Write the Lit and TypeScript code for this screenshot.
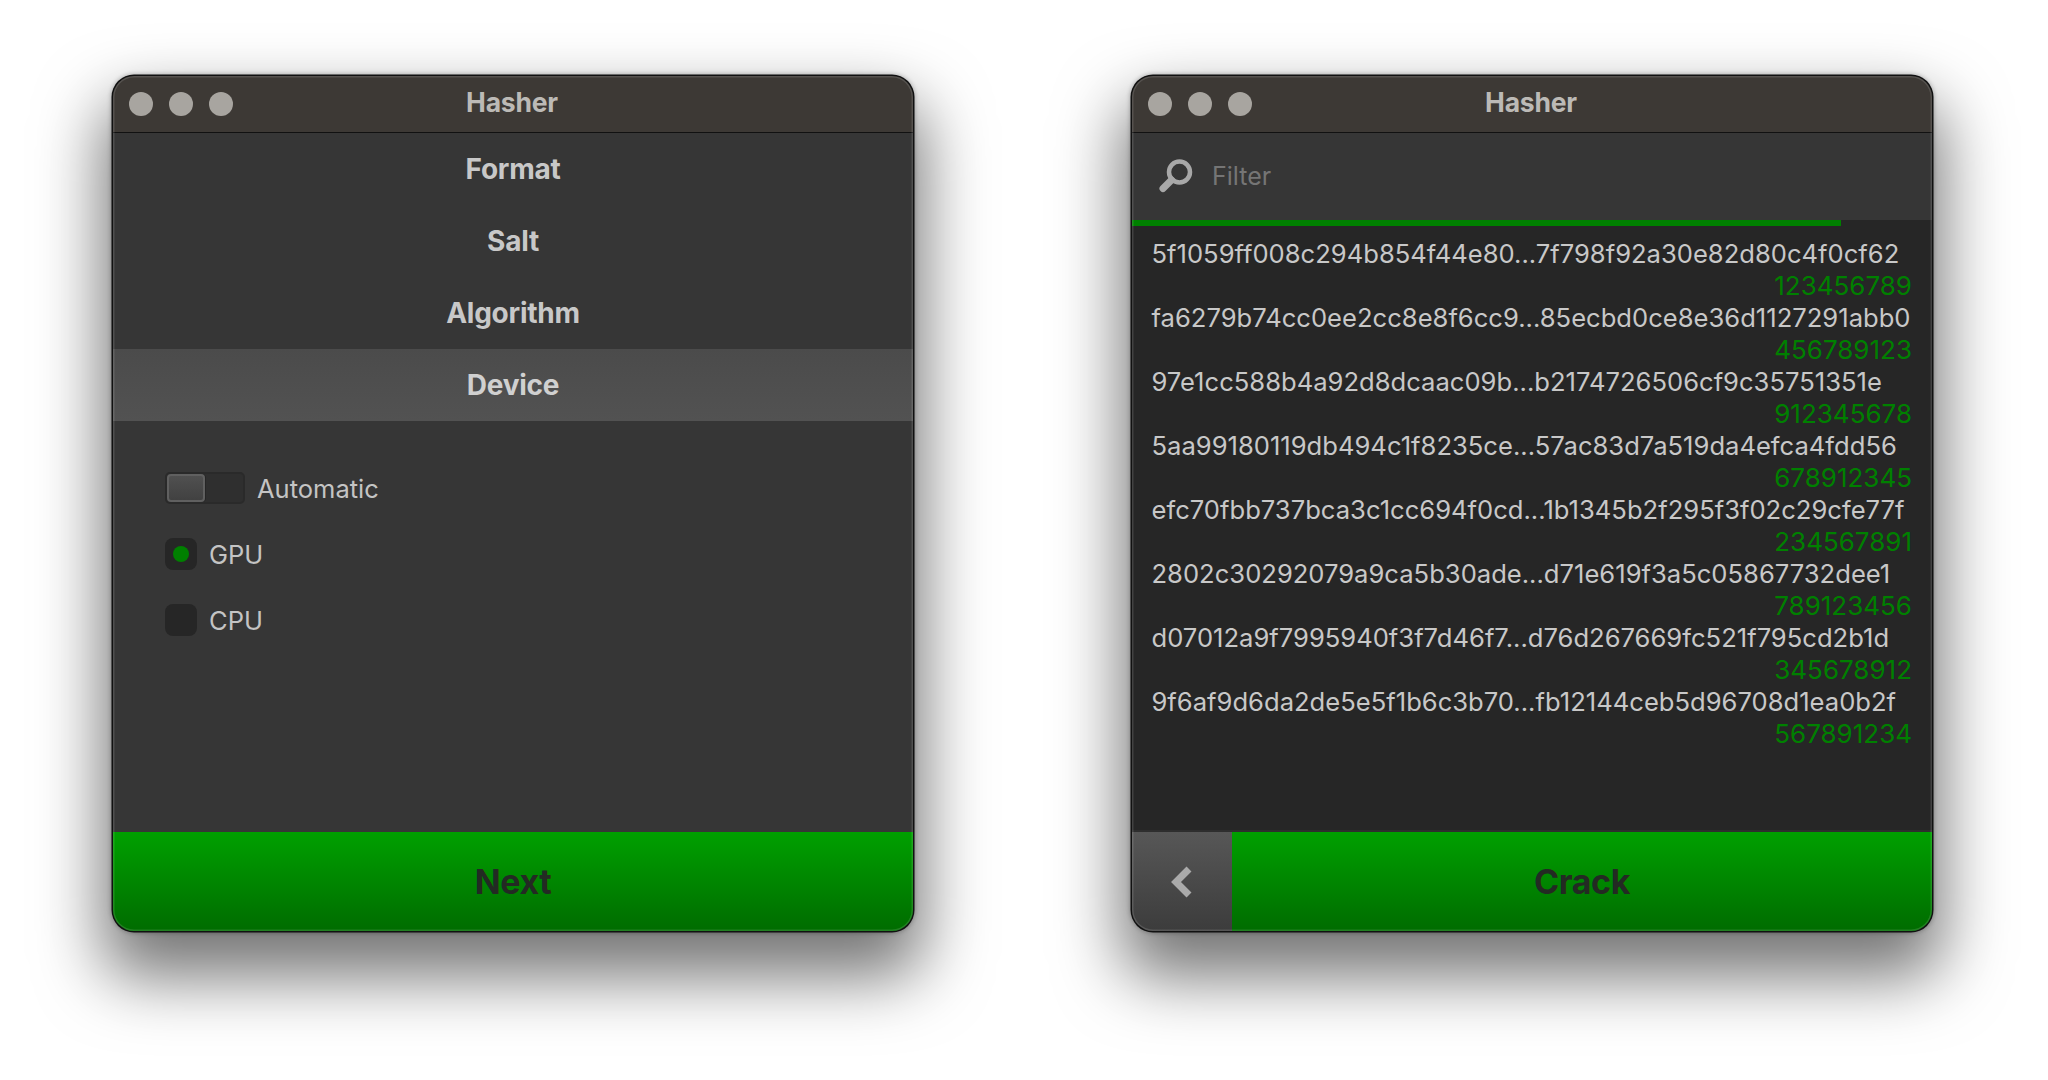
import { LitElement, html, css } from "lit";
import { customElement } from "lit/decorators.js";

const rows: [string, string][] = [
  ["5f1059ff008c294b854f44e80...7f798f92a30e82d80c4f0cf62", "123456789"],
  ["fa6279b74cc0ee2cc8e8f6cc9...85ecbd0ce8e36d1127291abb0", "456789123"],
  ["97e1cc588b4a92d8dcaac09b...b2174726506cf9c35751351e", "912345678"],
  ["5aa99180119db494c1f8235ce...57ac83d7a519da4efca4fdd56", "678912345"],
  ["efc70fbb737bca3c1cc694f0cd...1b1345b2f295f3f02c29cfe77f", "234567891"],
  ["2802c30292079a9ca5b30ade...d71e619f3a5c05867732dee1", "789123456"],
  ["d07012a9f7995940f3f7d46f7...d76d267669fc521f795cd2b1d", "345678912"],
  ["9f6af9d6da2de5e5f1b6c3b70...fb12144ceb5d96708d1ea0b2f", "567891234"],
];

@customElement("app-root")
export class AppRoot extends LitElement {
  static styles = css`
    :host { display: block; width: 2048px; height: 1080px; overflow: hidden; background: #fff; font-family: Inter, "Liberation Sans", sans-serif; }
    .page { display: flex; gap: 219px; padding: 76px 0 0 113px; }
    .win { width: 800px; height: 855px; box-sizing: border-box; border-radius: 21px; display: flex; flex-direction: column; overflow: hidden; background: #363636; position: relative;
      box-shadow: 0 0 0 1.5px #111, 0 0 4px 2px rgba(0,0,0,.25), 0 36px 66px 10px rgba(0,0,0,.54); }
    .win::after { content: ""; position: absolute; inset: 0; border-radius: inherit; pointer-events: none; box-shadow: inset 0 0 0 1.5px rgba(255,255,255,.13); }
    .title { flex: none; height: 56px; background: #3d3935; border-bottom: 1.5px solid #111; display: flex; align-items: center; padding-left: 16px; gap: 16px; position: relative; }
    .dot { width: 24px; height: 24px; border-radius: 50%; background: #a8a5a0; }
    .title-text { position: absolute; left: 0; right: 2px; top: 0; bottom: 4px; display: flex; align-items: center; justify-content: center; color: #bcbab6; font-size: 26.5px; font-weight: 700; letter-spacing: -0.2px; }
    .step { height: 71px; padding-bottom: 1px; flex: none; display: flex; align-items: center; justify-content: center; color: #c8c8c8; font-size: 28px; font-weight: 700; letter-spacing: -0.25px; }
    .step.on { background: linear-gradient(#4b4b4b, #525252); color: #d0d0d0; }
    .opts { flex: 1; display: flex; flex-direction: column; gap: 34px; padding: 51px 0 0 52px; }
    .opt { display: flex; align-items: center; gap: 12px; height: 32px; color: #c4c4c4; font-size: 25.5px; }
    .toggle { width: 80px; height: 32px; box-sizing: border-box; border-radius: 5px; background: #2f2f2f; border: 2px solid #2a2a2a; display: flex; }
    .knob { width: 38px; height: 28px; box-sizing: border-box; border-radius: 4px; background: linear-gradient(#505050, #414141); border: 2px solid #606060; box-shadow: 1px 0 0 #262626; }
    .radio { width: 32px; height: 32px; border-radius: 8px; background: #262626; display: flex; align-items: center; justify-content: center; }
    .radio i { width: 16px; height: 16px; border-radius: 50%; background: #008000; }
    .bottom { flex: none; height: 99px; display: flex; }
    .go { flex: 1; display: flex; align-items: center; justify-content: center; color: #232a23; font-size: 34px; font-weight: 700; letter-spacing: -0.4px; background: linear-gradient(#00a000, #006c00); padding-bottom: 1px; }
    .back { flex: none; width: 100px; display: flex; align-items: center; justify-content: center; background: linear-gradient(#575757, #3c3c3c); }
    .filter { flex: none; height: 86px; padding-bottom: 1px; display: flex; align-items: center; padding-left: 26px; gap: 18px; color: #757575; font-size: 25px; }
    .progress { flex: none; height: 6px; background: #262626; }
    .progress i { display: block; width: 709px; height: 100%; background: #008000; }
    .list { flex: 1; background: #262626; padding: 12px 20px 0 19.5px; line-height: 32px; font-size: 26px; }
    .hash { color: #c8c8c8; white-space: nowrap; font-size: 25.6px; }
    .val { color: #008000; text-align: right; }
    .sep { height: 2px; background: #2e2e2e; flex: none; }
  `;

  render() {
    return html`<div class="page">
      <div class="win">
        <div class="title"><span class="dot"></span><span class="dot"></span><span class="dot"></span><span class="title-text">Hasher</span></div>
        <div class="step">Format</div>
        <div class="step">Salt</div>
        <div class="step">Algorithm</div>
        <div class="step on">Device</div>
        <div class="opts">
          <div class="opt"><span class="toggle"><span class="knob"></span></span>Automatic</div>
          <div class="opt"><span class="radio"><i></i></span>GPU</div>
          <div class="opt"><span class="radio"></span>CPU</div>
        </div>
        <div class="bottom"><div class="go">Next</div></div>
      </div>
      <div class="win">
        <div class="title"><span class="dot"></span><span class="dot"></span><span class="dot"></span><span class="title-text">Hasher</span></div>
        <div class="filter">
          <svg width="36" height="36" viewBox="0 0 36 36"><circle cx="21.5" cy="14" r="10.5" fill="none" stroke="#a8a8a8" stroke-width="4.5"/><path d="M13.5 22 L5 30.5" stroke="#a8a8a8" stroke-width="7" stroke-linecap="round"/></svg>
          Filter
        </div>
        <div class="progress"><i></i></div>
        <div class="list">
          ${rows.map(([h, v]) => html`<div class="hash">${h}</div><div class="val">${v}</div>`)}
        </div>
        <div class="sep"></div>
        <div class="bottom">
          <div class="back"><svg width="24" height="36" viewBox="0 0 24 36"><path d="M19 5 L6 18 L19 31" fill="none" stroke="#aaa" stroke-width="7"/></svg></div>
          <div class="go">Crack</div>
        </div>
      </div>
    </div>`;
  }
}
